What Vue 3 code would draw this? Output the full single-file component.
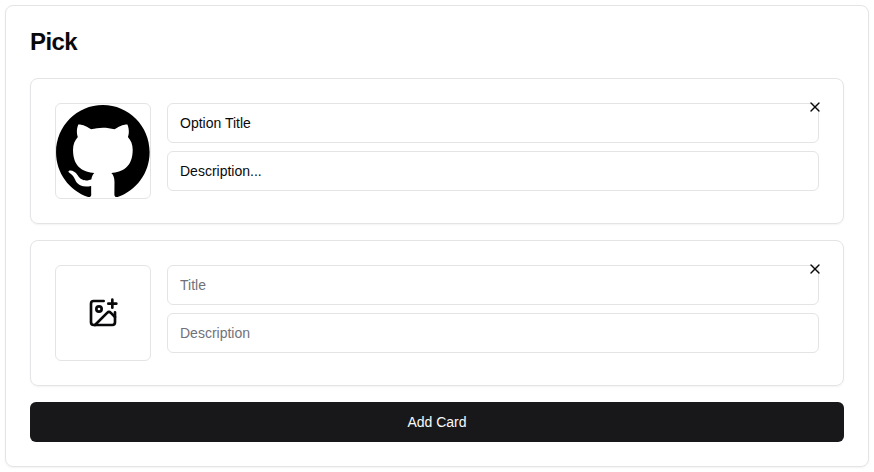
<script setup>
import { ref } from 'vue'

let nextId = 3
const cards = ref([
  { id: 1, title: 'Option Title', description: 'Description...', image: true },
  { id: 2, title: '', description: '', image: false },
])

function addCard() {
  cards.value.push({ id: nextId++, title: '', description: '', image: false })
}

function removeCard(id) {
  cards.value = cards.value.filter((card) => card.id !== id)
}
</script>

<template>
  <main class="page">
    <section class="panel">
      <h3 class="panel-title">Pick</h3>
      <div class="stack">
        <article v-for="card in cards" :key="card.id" class="card">
          <button class="picture" type="button">
            <svg v-if="card.image" class="logo" viewBox="0 0 98 96" width="94" height="92">
              <path
                fill-rule="evenodd"
                clip-rule="evenodd"
                d="M48.854 0C21.839 0 0 22 0 49.217c0 21.756 13.993 40.172 33.405 46.69 2.427.49 3.316-1.059 3.316-2.362 0-1.141-.08-5.052-.08-9.127-13.59 2.934-16.42-5.867-16.42-5.867-2.184-5.704-5.42-7.17-5.42-7.17-4.448-3.015.324-3.015.324-3.015 4.934.326 7.523 5.052 7.523 5.052 4.367 7.496 11.404 5.378 14.235 4.074.404-3.178 1.699-5.378 3.074-6.6-10.839-1.141-22.243-5.378-22.243-24.283 0-5.378 1.94-9.778 5.014-13.2-.485-1.222-2.184-6.275.486-13.038 0 0 4.125-1.304 13.426 5.052a46.97 46.97 0 0 1 12.214-1.63c4.125 0 8.33.571 12.213 1.63 9.302-6.356 13.427-5.052 13.427-5.052 2.67 6.763.97 11.816.485 13.038 3.155 3.422 5.015 7.822 5.015 13.2 0 18.905-11.404 23.06-22.324 24.283 1.78 1.548 3.316 4.481 3.316 9.126 0 6.6-.08 11.897-.08 13.526 0 1.304.89 2.853 3.316 2.364 19.412-6.52 33.405-24.935 33.405-46.691C97.707 22 75.788 0 48.854 0z"
              />
            </svg>
            <svg v-else class="line-icon" viewBox="0 0 24 24" width="32" height="32">
              <path d="M16 5h6" />
              <path d="M19 2v6" />
              <path d="M21 11.5V19a2 2 0 0 1-2 2H5a2 2 0 0 1-2-2V5a2 2 0 0 1 2-2h7.5" />
              <path d="m21 15-3.086-3.086a2 2 0 0 0-2.828 0L6 21" />
              <circle cx="9" cy="9" r="2" />
            </svg>
          </button>
          <div class="fields">
            <input v-model="card.title" class="field" placeholder="Title" />
            <input v-model="card.description" class="field" placeholder="Description" />
          </div>
          <button class="remove" type="button" @click="removeCard(card.id)">
            <svg class="line-icon" viewBox="0 0 24 24" width="16" height="16">
              <path d="M18 6 6 18" />
              <path d="m6 6 12 12" />
            </svg>
          </button>
        </article>
        <button class="add" type="button" @click="addCard">Add Card</button>
      </div>
    </section>
  </main>
</template>

<style>
body {
  background: #fff;
}
</style>

<style scoped>
* {
  box-sizing: border-box;
}

.page {
  padding: 5px;
  font-family: "Liberation Sans", Arial, sans-serif;
  color: #09090b;
}

.panel {
  padding: 24px;
  border: 1px solid #e4e4e7;
  border-radius: 8px;
  box-shadow: 0 1px 2px rgba(0, 0, 0, 0.05);
}

.panel-title {
  margin: 0 0 24px;
  font-size: 24px;
  font-weight: 600;
  line-height: 24px;
  letter-spacing: -0.6px;
}

.stack {
  display: flex;
  flex-direction: column;
  gap: 16px;
}

.card {
  position: relative;
  display: flex;
  gap: 16px;
  padding: 24px;
  border: 1px solid #e4e4e7;
  border-radius: 8px;
  box-shadow: 0 1px 2px rgba(0, 0, 0, 0.05);
}

button {
  font: inherit;
  color: inherit;
  cursor: pointer;
}

.picture {
  display: flex;
  flex: none;
  align-items: center;
  justify-content: center;
  width: 96px;
  height: 96px;
  padding: 0;
  border: 1px solid #e4e4e7;
  border-radius: 6px;
  background: #fff;
}

.logo {
  flex: none;
  fill: #000;
}

.line-icon {
  display: block;
  flex: none;
  fill: none;
  stroke: currentColor;
  stroke-width: 2;
  stroke-linecap: round;
  stroke-linejoin: round;
}

.fields {
  display: flex;
  flex: 1;
  flex-direction: column;
  gap: 8px;
}

.field {
  width: 100%;
  height: 40px;
  padding: 8px 12px;
  border: 1px solid #e4e4e7;
  border-radius: 6px;
  outline: none;
  background: #fff;
  font-family: inherit;
  font-size: 14px;
  line-height: 20px;
  color: inherit;
}

.field::placeholder {
  color: #71717a;
  opacity: 1;
}

.remove {
  position: absolute;
  top: 20px;
  right: 20px;
  padding: 0;
  border: 0;
  background: none;
}

.add {
  height: 40px;
  padding: 8px 16px;
  border: 0;
  border-radius: 6px;
  background: #18181b;
  font-size: 14px;
  font-weight: 500;
  line-height: 20px;
  color: #fafafa;
}
</style>
